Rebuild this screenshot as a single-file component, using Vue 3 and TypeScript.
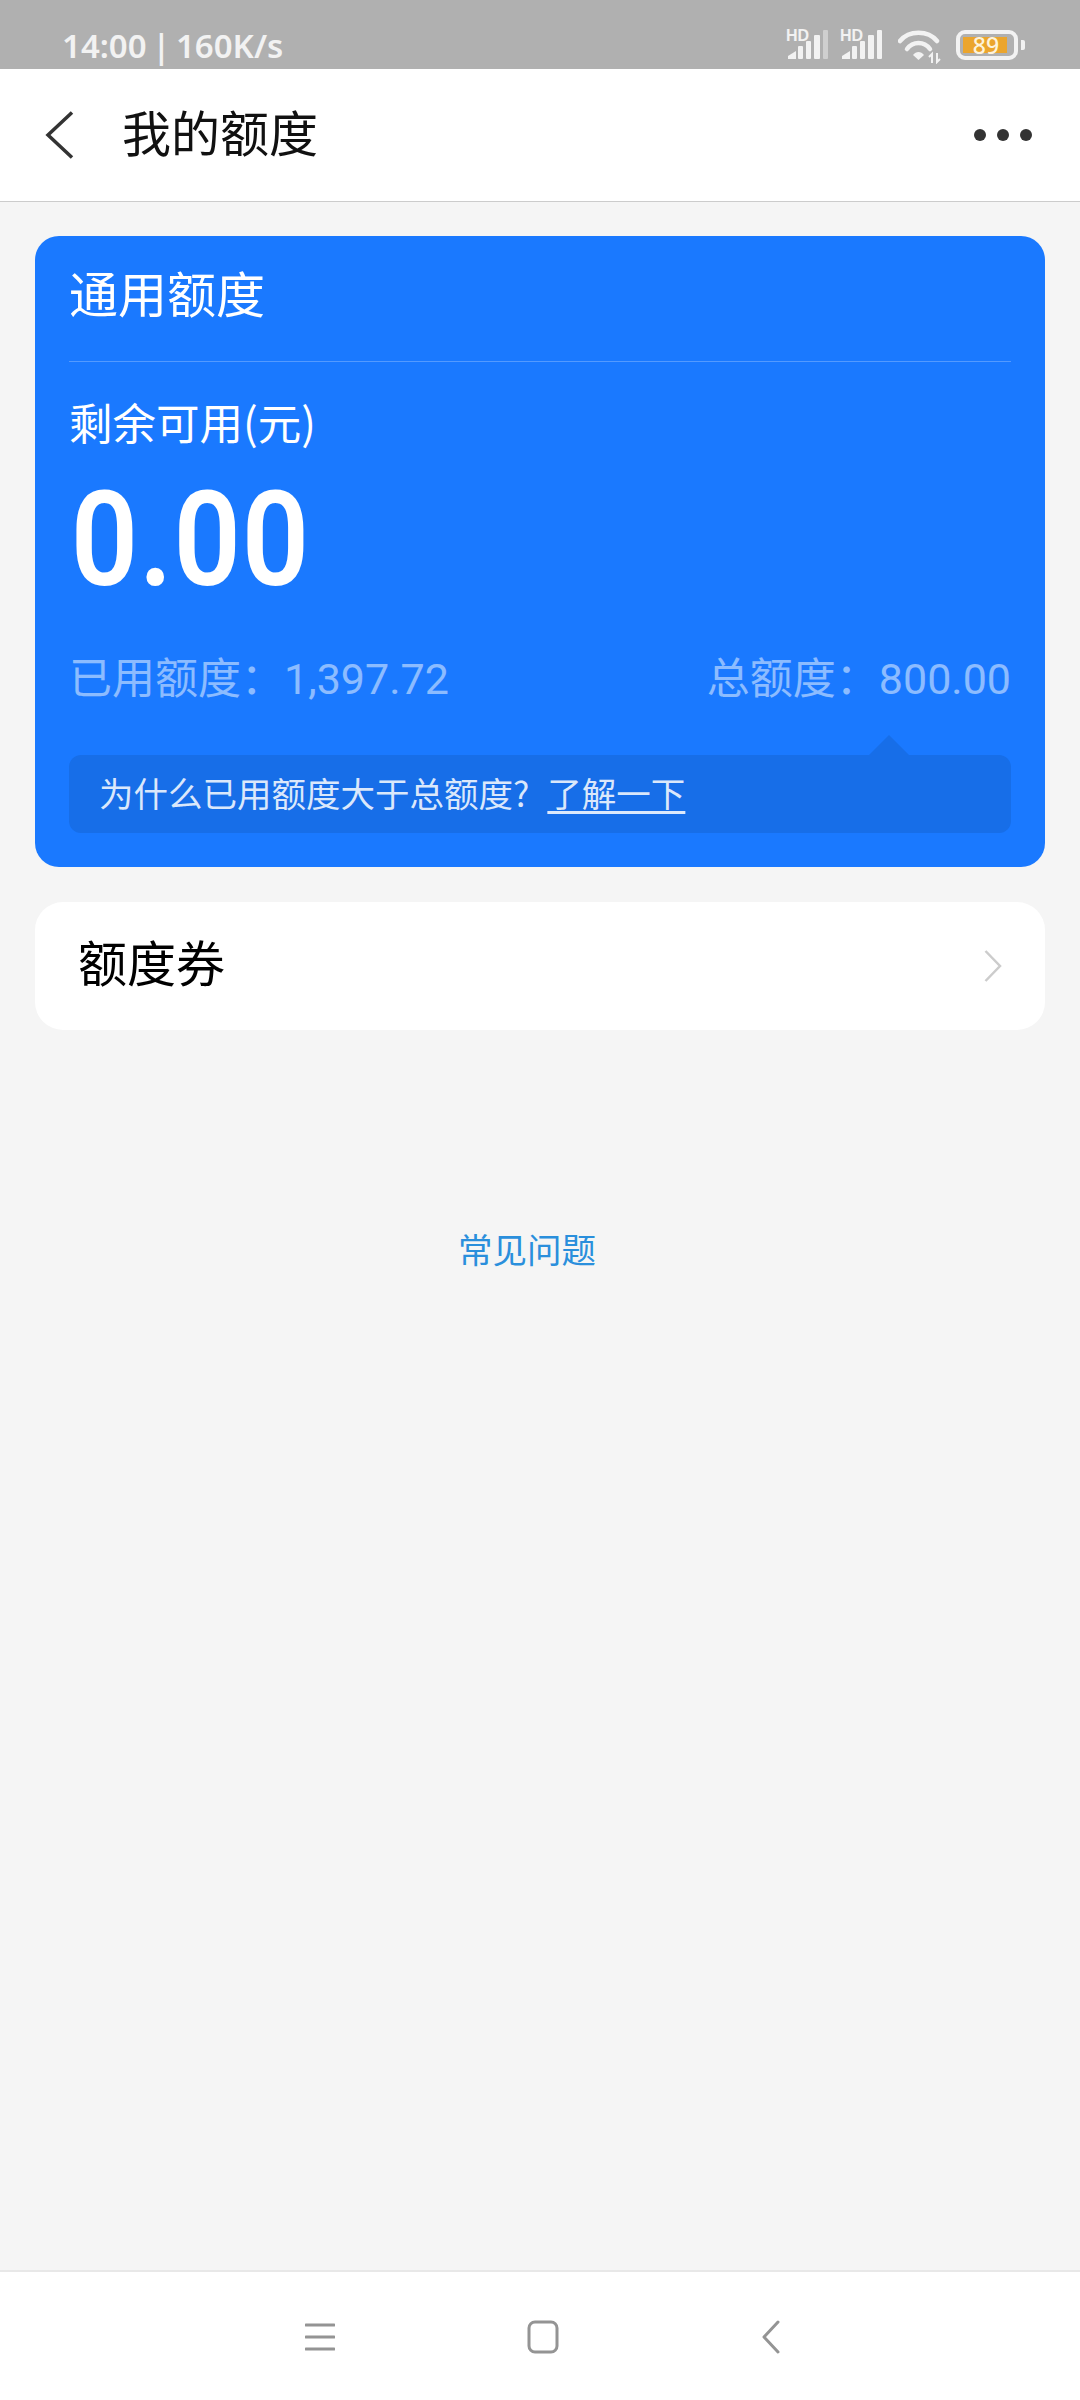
<template>
  <div class="page">
    <div class="status-bar">
      <span class="status-text">14:00 | 160K/s</span>
      <div class="status-icons">
        <div v-for="(sim, i) in sims" :key="i" class="signal">
          <span class="hd">HD</span>
          <svg width="42" height="30" viewBox="0 0 42 30">
            <path d="M2 29v-3l8-5v8z" fill="#f2f2f2" />
            <rect x="12" y="16" width="5" height="13" rx="1" fill="#f2f2f2" />
            <rect x="20" y="11" width="5" height="18" rx="1" fill="#f2f2f2" />
            <rect x="28" y="5" width="6" height="24" rx="1" fill="#f2f2f2" />
            <rect x="37" y="0" width="5" height="29" rx="1" :fill="sim.last" />
          </svg>
        </div>
        <svg class="wifi" width="44" height="34" viewBox="0 0 44 34">
          <path d="M2 11C11 0 30 0 39 11" fill="none" stroke="#f2f2f2" stroke-width="4.500" stroke-linecap="round" />
          <path d="M9 19C15 11 26 11 32 19" fill="none" stroke="#f2f2f2" stroke-width="4.500" stroke-linecap="round" />
          <path d="M15 25C18 21 23 21 26 25L20.500 30z" fill="#f2f2f2" />
          <path d="M34 33v-9l-3 3M39 23v9l3-3" fill="none" stroke="#f2f2f2" stroke-width="2" />
        </svg>
        <div class="battery">
          <div class="battery-body"><span class="battery-level">89</span></div>
          <div class="battery-nub"></div>
        </div>
      </div>
    </div>

    <header class="top-bar">
      <svg class="back" width="30" height="48" viewBox="0 0 30 48">
        <path d="M27 1.500L3 24l24 22.500" fill="none" stroke="#333" stroke-width="3.500" />
      </svg>
      <h1 class="title">我的额度</h1>
      <div class="more"><i></i><i></i><i></i></div>
    </header>

    <main class="content">
      <section class="quota-card">
        <div class="card-title">通用额度</div>
        <div class="remain-label">剩余可用(元)</div>
        <div class="remain-amount">{{ remain }}</div>
        <div class="stats">
          <span>已用额度&#xFF1A;<em>{{ used }}</em></span>
          <span>总额度&#xFF1A;<em>{{ total }}</em></span>
        </div>
        <div class="hint">
          为什么已用额度大于总额度?<a class="hint-link">了解一下</a>
        </div>
      </section>

      <section class="coupon-row">
        <span class="coupon-name">额度券</span>
        <svg width="18" height="32" viewBox="0 0 18 32">
          <path d="M1.500 1L16 16 1.500 31" fill="none" stroke="#ccc" stroke-width="2.500" />
        </svg>
      </section>

      <div class="faq">常见问题</div>
    </main>

    <footer class="nav-bar">
      <svg class="nav-menu" width="30" height="28" viewBox="0 0 30 28">
        <path d="M1 2h28M1 14h28M1 26h28" stroke="#949494" stroke-width="3" stroke-linecap="round" />
      </svg>
      <svg class="nav-home" width="32" height="34" viewBox="0 0 32 34">
        <rect x="2" y="2" width="28" height="30" rx="6" fill="none" stroke="#949494" stroke-width="3" />
      </svg>
      <svg class="nav-back" width="18" height="34" viewBox="0 0 18 34">
        <path d="M16 2L2 17l14 15" fill="none" stroke="#949494" stroke-width="3" stroke-linecap="round" stroke-linejoin="round" />
      </svg>
    </footer>
  </div>
</template>

<script setup lang="ts">
const sims = [{ last: '#cfcfcf' }, { last: '#f2f2f2' }]

const remain = '0.00'
const used = '1,397.72'
const total = '800.00'
</script>

<style scoped>
.page {
  width: 1080px;
  height: 2400px;
  display: flex;
  flex-direction: column;
  background: #f5f5f5;
  font-family: "Noto Sans CJK SC", "Noto Sans", sans-serif;
}

.status-bar {
  height: 69px;
  flex-shrink: 0;
  display: flex;
  justify-content: space-between;
  background: #b0b0b0;
  padding: 27px 55px 0 62px;
  box-sizing: border-box;
}

.status-text {
  font-family: "Noto Sans", sans-serif;
  font-size: 33px;
  line-height: 38px;
  font-weight: 600;
  word-spacing: -3px;
  color: #f2f2f2;
}

.status-icons {
  display: flex;
  align-items: flex-start;
  margin-top: 3px;
}

.signal {
  width: 54px;
  height: 30px;
  position: relative;
}

.signal svg {
  position: absolute;
  left: 0;
  top: 0;
}

.hd {
  position: absolute;
  left: 0;
  top: -2px;
  font-family: "Liberation Sans", sans-serif;
  font-size: 16px;
  line-height: 16px;
  font-weight: 700;
  color: #f2f2f2;
}

.wifi {
  margin-left: 4px;
}

.battery {
  display: flex;
  align-items: center;
  margin-left: 14px;
}

.battery-body {
  width: 62px;
  height: 30px;
  box-sizing: border-box;
  border: 4px solid #f2f2f2;
  border-radius: 9px;
  padding: 3px;
}

.battery-level {
  display: block;
  width: 44px;
  height: 16px;
  box-sizing: border-box;
  padding-left: 2px;
  background: #eba52d;
  color: #fdf3dc;
  font-family: "Noto Sans", sans-serif;
  font-size: 23px;
  line-height: 16px;
  font-weight: 500;
  text-align: center;
}

.battery-nub {
  width: 4px;
  height: 10px;
  margin-left: 3px;
  background: #f2f2f2;
  border-radius: 0 2px 2px 0;
}

.top-bar {
  height: 133px;
  flex-shrink: 0;
  display: flex;
  align-items: center;
  background: #fff;
  border-bottom: 1px solid #ccc;
  box-sizing: border-box;
  padding: 0 48px 0 45px;
}

.title {
  margin: 0 0 8px 47px;
  font-size: 49px;
  line-height: 60px;
  font-weight: 400;
  color: #111;
}

.more {
  margin-left: auto;
  display: flex;
  gap: 11px;
}

.more i {
  width: 12px;
  height: 12px;
  border-radius: 50%;
  background: #333;
}

.content {
  flex: 1;
  padding: 34px 35px 0;
  box-sizing: border-box;
}

.quota-card {
  height: 631px;
  box-sizing: border-box;
  background: #1a79ff;
  border-radius: 24px;
  padding: 0 34px;
  color: #fff;
}

.card-title {
  height: 126px;
  box-sizing: border-box;
  border-bottom: 1px solid rgba(255, 255, 255, 0.25);
  font-size: 49px;
  line-height: 112px;
}

.remain-label {
  margin-top: 30px;
  font-size: 43.500px;
  line-height: 60px;
}

.remain-amount {
  margin-top: 23px;
  padding-left: 2px;
  font-family: Roboto, sans-serif;
  font-size: 131px;
  line-height: 130px;
  letter-spacing: 1px;
  font-weight: 600;
  transform: scaleX(0.9);
  transform-origin: left center;
}

.stats {
  margin-top: 40px;
  height: 60px;
  display: flex;
  justify-content: space-between;
  font-size: 43px;
  line-height: 60px;
  color: rgba(255, 255, 255, 0.5);
}

.stats em {
  font-style: normal;
  font-family: Roboto, sans-serif;
}

.hint {
  position: relative;
  margin-top: 50px;
  height: 78px;
  box-sizing: border-box;
  padding-left: 30px;
  border-radius: 12px;
  background: #176ee8;
  font-size: 34.500px;
  line-height: 74px;
  color: rgba(255, 255, 255, 0.85);
}

.hint::before {
  content: "";
  position: absolute;
  right: 102px;
  top: -20px;
  border-left: 20px solid transparent;
  border-right: 20px solid transparent;
  border-bottom: 20px solid #176ee8;
}

.hint-link {
  margin-left: 18px;
  text-decoration: underline;
  text-underline-offset: 4px;
}

.coupon-row {
  margin-top: 35px;
  height: 128px;
  display: flex;
  align-items: center;
  justify-content: space-between;
  box-sizing: border-box;
  padding: 0 43px;
  background: #fff;
  border-radius: 28px;
  font-size: 49px;
  color: #000;
}

.coupon-name {
  margin-bottom: 12px;
}

.faq {
  margin-top: 193px;
  padding-right: 26px;
  text-align: center;
  font-size: 34.500px;
  line-height: 50px;
  color: #2a8fdc;
}

.nav-bar {
  height: 130px;
  flex-shrink: 0;
  display: flex;
  align-items: center;
  box-sizing: border-box;
  padding: 2px 0 0 305px;
  background: #fff;
  border-top: 2px solid #e8e8e8;
}

.nav-home {
  margin-left: 192px;
}

.nav-back {
  margin-left: 203px;
}
</style>
